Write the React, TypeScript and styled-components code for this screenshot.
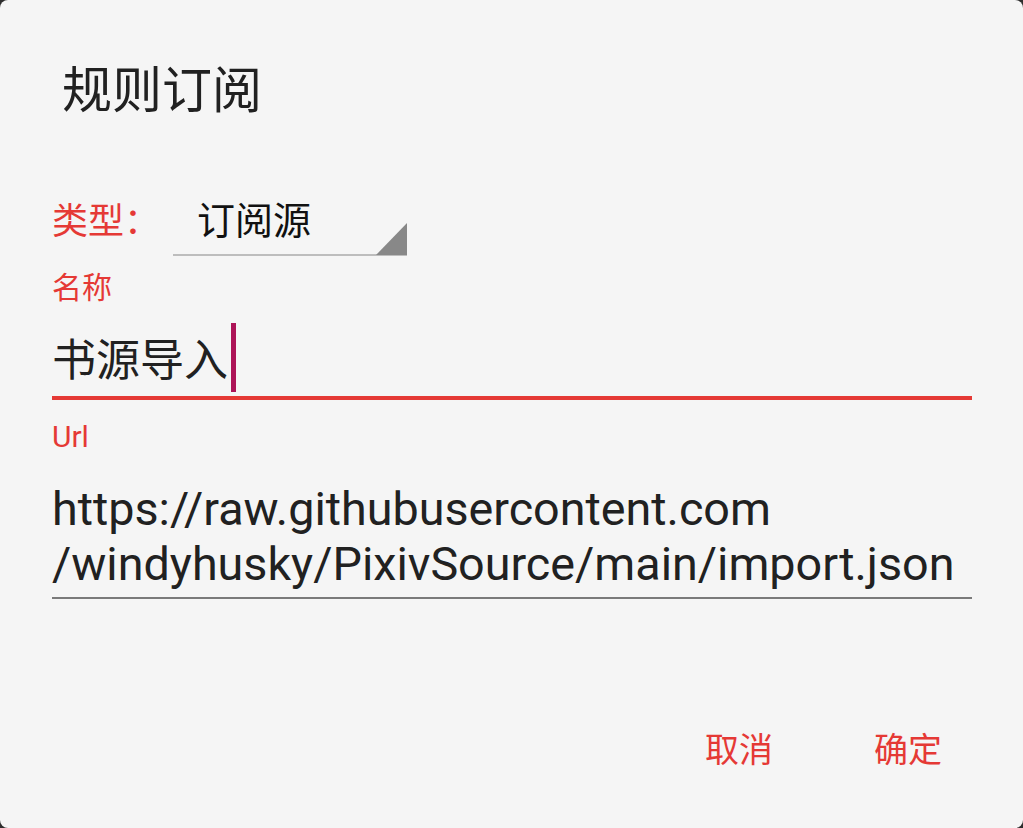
import React from "react";
import styled, { createGlobalStyle } from "styled-components";

const Global = createGlobalStyle`
  html, body { margin: 0; padding: 0; background: #2e2e2e; }
  body { width: 1023px; height: 828px; overflow: hidden; }
`;

const RED = "#e53935";
const CJK = `"Noto Sans CJK SC", "Noto Sans", sans-serif`;
const LATIN = `Roboto, "Noto Sans CJK SC", sans-serif`;

const Dialog = styled.div`
  box-sizing: border-box;
  width: 1023px;
  height: 828px;
  background: #f5f5f5;
  border-radius: 8px;
  padding: 0 51px 0 52px;
  display: flex;
  flex-direction: column;
`;

const Title = styled.h1`
  margin: 56px 0 0 10px;
  font-family: ${CJK};
  font-weight: 400;
  font-size: 50px;
  line-height: 60px;
  color: #212121;
`;

const TypeRow = styled.div`
  margin-top: 78px;
  display: flex;
  align-items: flex-start;
`;

const TypeLabel = styled.span`
  width: 121px;
  font-family: ${CJK};
  font-size: 36px;
  line-height: 48px;
  color: ${RED};
`;

const Spinner = styled.div`
  position: relative;
  box-sizing: border-box;
  width: 234px;
  padding: 0 0 12px 24px;
  border-bottom: 2px solid #bdbdbd;
  font-family: ${CJK};
  font-size: 38px;
  line-height: 48px;
  color: #111;
`;

const Arrow = styled.svg`
  position: absolute;
  right: 0;
  bottom: -1px;
`;

const FieldLabel = styled.div<{ $gap: number; $latin?: boolean }>`
  margin-top: ${(p) => p.$gap}px;
  font-family: ${(p) => (p.$latin ? LATIN : CJK)};
  font-size: 30px;
  line-height: 36px;
  color: ${RED};
`;

const NameInput = styled.div`
  margin-top: 19px;
  display: flex;
  align-items: center;
  height: 70px;
  padding-bottom: 4px;
  border-bottom: 4px solid ${RED};
  font-family: ${CJK};
  font-size: 44px;
  line-height: 70px;
  color: #212121;
`;

const Caret = styled.span`
  display: block;
  width: 5px;
  height: 69px;
  margin-left: 3px;
  background: #ad1457;
`;

const UrlInput = styled.div`
  margin-top: 27px;
  padding-bottom: 5px;
  border-bottom: 2px solid #7a7a7a;
  font-family: ${LATIN};
  font-size: 46.7px;
  line-height: 55px;
  color: #212121;
`;

const ButtonRow = styled.div`
  margin-top: 125px;
  padding-right: 30px;
  display: flex;
  justify-content: flex-end;
  gap: 101px;
`;

const TextButton = styled.button`
  border: none;
  background: none;
  padding: 0;
  font-family: ${CJK};
  font-size: 34px;
  line-height: 48px;
  color: ${RED};
`;

export default function App() {
  return (
    <>
      <Global />
      <Dialog>
        <Title>规则订阅</Title>
        <TypeRow>
          <TypeLabel>类型：</TypeLabel>
          <Spinner>
            订阅源
            <Arrow width="31" height="32" viewBox="0 0 31 32">
              <polygon points="31,0 31,32 0,32" fill="#888888" />
            </Arrow>
          </Spinner>
        </TypeRow>
        <FieldLabel $gap={11}>名称</FieldLabel>
        <NameInput>
          <span>书源导入</span>
          <Caret />
        </NameInput>
        <FieldLabel $gap={19} $latin>
          Url
        </FieldLabel>
        <UrlInput>
          https://raw.githubusercontent.com
          <br />
          /windyhusky/PixivSource/main/import.json
        </UrlInput>
        <ButtonRow>
          <TextButton>取消</TextButton>
          <TextButton>确定</TextButton>
        </ButtonRow>
      </Dialog>
    </>
  );
}
